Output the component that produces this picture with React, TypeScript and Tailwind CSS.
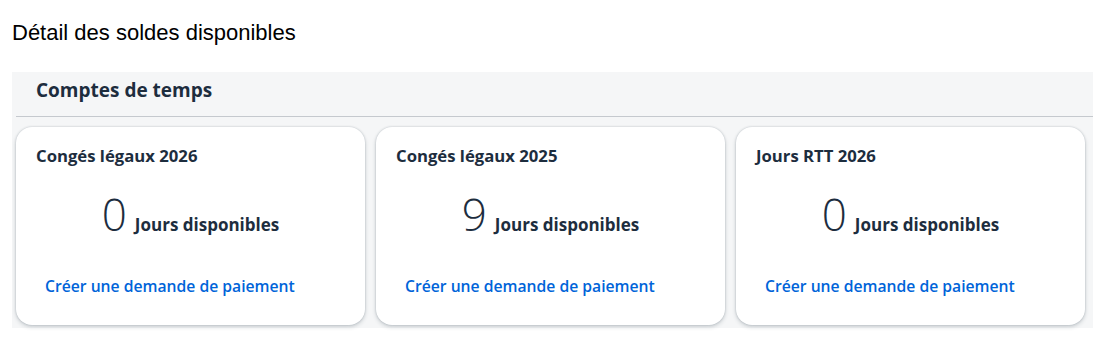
import React from 'react';

type Balance = {
  title: string;
  value: number;
};

const balances: Balance[] = [
  { title: 'Congés légaux 2026', value: 0 },
  { title: 'Congés légaux 2025', value: 9 },
  { title: 'Jours RTT 2026', value: 0 },
];

function BalanceCard({ balance }: { balance: Balance }) {
  return (
    <div className="flex h-[198px] w-[349px] flex-col rounded-2xl bg-white shadow-[0_0_2px_rgba(34,53,72,0.25),0_2px_4px_rgba(34,53,72,0.2)]">
      <div className="px-5 pt-[19px] text-[16.7px] font-bold leading-5 text-[#1d2d3e]">{balance.title}</div>
      <div className="mt-[20px] flex items-baseline justify-center">
        <span className="text-[44px] font-light leading-[56px] text-[#1d2d3e]">{balance.value}</span>
        <span className="ml-2 text-[17px] font-bold text-[#1d2d3e]">Jours disponibles</span>
      </div>
      <div className="mt-[28px] px-5">
        <button className="rounded px-[9px] py-1 text-[15.7px] font-semibold leading-6 text-[#0064d9] hover:underline">
          Créer une demande de paiement
        </button>
      </div>
    </div>
  );
}

export default function App() {
  return (
    <div className="h-[337px] w-[1118px] bg-white font-['Open_Sans',sans-serif]">
      <h1 className="h-[72px] px-3 pt-[20px] font-['Liberation_Sans',Arial,sans-serif] text-[22px] leading-[26px] text-black">
        Détail des soldes disponibles
      </h1>

      {/* Time accounts panel */}
      <div className="ml-3 h-[256px] w-[1081px] bg-[#f5f6f7]">
        <div className="ml-1 h-[45px] border-b border-[#c5c9ce] px-5 pt-[5px]">
          <h2 className="text-[19px] font-bold leading-[26px] text-[#1d2d3e]">Comptes de temps</h2>
        </div>
        <div className="flex gap-[11px] pl-1 pt-[10px]">
          {balances.map((b) => (
            <BalanceCard key={b.title} balance={b} />
          ))}
        </div>
      </div>
    </div>
  );
}
